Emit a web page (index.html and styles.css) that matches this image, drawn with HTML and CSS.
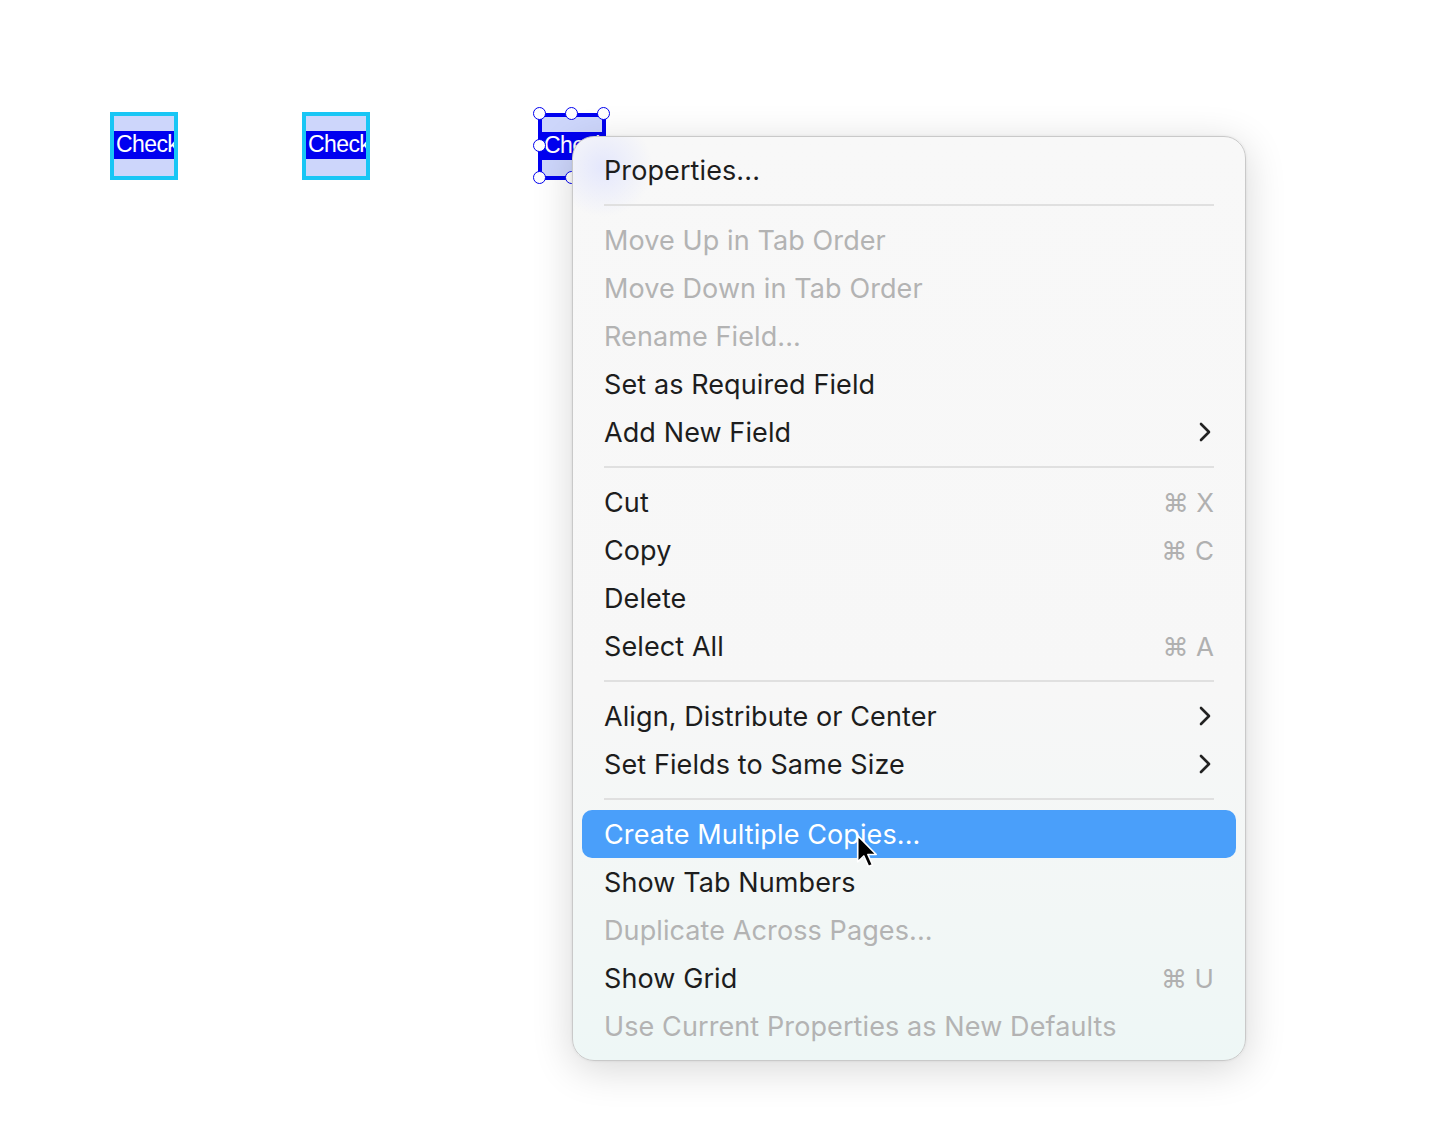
FILE: index.html
```html
<!DOCTYPE html>
<html lang="en">
<head>
    <meta charset="UTF-8">
    <title>Form Fields</title>
    <link rel="stylesheet" href="styles.css">
</head>
<body>
    <div class="canvas">
        <!-- checkbox fields placed on the page -->
        <div class="field field-one"><div class="field_band">Check</div></div>
        <div class="field field-two"><div class="field_band">Check</div></div>
        <div class="field field-three selected">
            <div class="field_band">Check</div>
            <span class="handle h-tl"></span>
            <span class="handle h-tc"></span>
            <span class="handle h-tr"></span>
            <span class="handle h-ml"></span>
            <span class="handle h-bl"></span>
            <span class="handle h-bc"></span>
        </div>

        <div class="menu">
            <div class="item">Properties...</div>
            <div class="sep"></div>
            <div class="item disabled">Move Up in Tab Order</div>
            <div class="item disabled">Move Down in Tab Order</div>
            <div class="item disabled">Rename Field...</div>
            <div class="item">Set as Required Field</div>
            <div class="item">Add New Field
                <svg class="chevron" viewBox="0 0 14 20" width="14" height="20"><path d="M3 2l8 8-8 8" fill="none" stroke="#222" stroke-width="2.6" stroke-linecap="round" stroke-linejoin="round"/></svg>
            </div>
            <div class="sep"></div>
            <div class="item">Cut <span class="key">⌘ X</span></div>
            <div class="item">Copy <span class="key">⌘ C</span></div>
            <div class="item">Delete</div>
            <div class="item">Select All <span class="key">⌘ A</span></div>
            <div class="sep"></div>
            <div class="item">Align, Distribute or Center
                <svg class="chevron" viewBox="0 0 14 20" width="14" height="20"><path d="M3 2l8 8-8 8" fill="none" stroke="#222" stroke-width="2.6" stroke-linecap="round" stroke-linejoin="round"/></svg>
            </div>
            <div class="item">Set Fields to Same Size
                <svg class="chevron" viewBox="0 0 14 20" width="14" height="20"><path d="M3 2l8 8-8 8" fill="none" stroke="#222" stroke-width="2.6" stroke-linecap="round" stroke-linejoin="round"/></svg>
            </div>
            <div class="sep"></div>
            <div class="item active">Create Multiple Copies...</div>
            <div class="item">Show Tab Numbers</div>
            <div class="item disabled">Duplicate Across Pages...</div>
            <div class="item">Show Grid <span class="key">⌘ U</span></div>
            <div class="item disabled">Use Current Properties as New Defaults</div>
        </div>

        <!-- mouse pointer -->
        <svg class="pointer" viewBox="0 0 20 32" width="22" height="35">
            <path d="M1.5 1.5v24l5.6-5.4 4.3 9.6 3.6-1.6-4.2-9.4h7.6z" fill="#000" stroke="#fff" stroke-width="1.5" stroke-linejoin="round"/>
        </svg>
    </div>
</body>
</html>
```

FILE: styles.css
```css
body {
    margin: 0;
    padding: 0;
    background-color: #ffffff;
    font-family: 'Inter', 'Noto Sans', sans-serif;
}

.canvas {
    position: relative;
    width: 1430px;
    height: 1126px;
    overflow: hidden;
}

/* form fields */
.field {
    position: absolute;
    top: 112px;
    width: 68px;
    height: 68px;
    box-sizing: border-box;
    border: 4px solid #19c6f5;
    background-color: #cdd6fb;
    display: flex;
    align-items: center;
    overflow: hidden;
}

.field-one { left: 110px; }
.field-two { left: 302px; }

.field-three {
    left: 538px;
    top: 113px;
    height: 67px;
    border: 4px solid #0000f0;
    overflow: visible;
}

.field_band {
    width: 100%;
    height: 28px;
    margin-top: -2px;
    background-color: #0000f0;
    color: #ffffff;
    font-family: 'Liberation Sans', Arial, sans-serif;
    font-size: 23px;
    line-height: 26px;
    padding-left: 2px;
    letter-spacing: -0.6px;
    overflow: hidden;
    white-space: nowrap;
}

.handle {
    position: absolute;
    width: 11px;
    height: 11px;
    border: 1.5px solid #0000f0;
    border-radius: 50%;
    background-color: #ffffff;
}

.h-tl { left: -9px; top: -10px; }
.h-tc { left: 23px; top: -10px; }
.h-tr { left: 55px; top: -10px; }
.h-ml { left: -9px; top: 22px; }
.h-bl { left: -9px; top: 54px; }
.h-bc { left: 23px; top: 54px; }

/* context menu */
.menu {
    position: absolute;
    left: 572px;
    top: 136px;
    width: 674px;
    box-sizing: border-box;
    padding: 9px 9px 10px;
    border: 1px solid #c9c9c9;
    border-radius: 22px;
    background:
        radial-gradient(circle at 30px 30px, rgba(215, 220, 255, 0.6), rgba(215, 220, 255, 0) 50px),
        linear-gradient(to bottom, #f8f8f8 0%, #f7f7f7 60%, #f2f7f6 85%, #eef7f6 100%);
    box-shadow: 0 8px 40px rgba(0, 0, 0, 0.16), 0 0 3px rgba(0, 0, 0, 0.08);
}

.item {
    height: 48px;
    display: flex;
    align-items: center;
    justify-content: space-between;
    padding: 0 22px 0 22px;
    border-radius: 10px;
    font-size: 27px;
    letter-spacing: 0.1px;
    color: #1d1d1d;
    white-space: nowrap;
}

.item.disabled {
    color: #b3b3b3;
}

.item.active {
    background-color: #4a9ffa;
    color: #ffffff;
}

.key {
    color: #b0b0b0;
    font-family: 'Inter', 'DejaVu Sans', sans-serif;
    font-size: 26px;
}

.chevron {
    margin-right: 2px;
}

.sep {
    height: 2px;
    margin: 10px 22px 10px 22px;
    background-color: #e0e0e0;
}

.pointer {
    position: absolute;
    left: 856px;
    top: 834px;
}
```
